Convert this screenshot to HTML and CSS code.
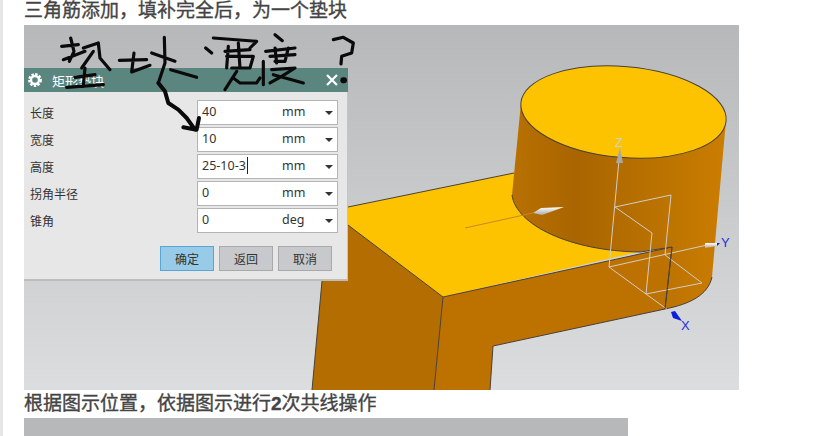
FILE: index.html
```html
<!DOCTYPE html>
<html lang="zh-CN">

<head>
    <meta charset="UTF-8">
    <title>垫块</title>
    <link rel="stylesheet" href="styles.css">
</head>

<body>
    <h3 class="first">三角筋添加，填补完全后，为一个垫块</h3>

    <div class="shot">
        <!-- Model view, drawn in page coordinates -->
        <svg class="scene" viewBox="24 25 715 365" width="715" height="365">
            <defs>
                <linearGradient id="bg" x1="0" y1="0" x2="0" y2="1">
                    <stop offset="0" stop-color="#b7b8ba" />
                    <stop offset="1" stop-color="#dcddde" />
                </linearGradient>
                <linearGradient id="body" gradientUnits="userSpaceOnUse" x1="512" y1="0" x2="726" y2="0">
                    <stop offset="0" stop-color="#b87000" />
                    <stop offset=".3" stop-color="#a96500" />
                    <stop offset=".8" stop-color="#c07600" />
                    <stop offset="1" stop-color="#cb7d00" />
                </linearGradient>
                <linearGradient id="cone" x1="0" y1="0" x2="0" y2="1">
                    <stop offset="0" stop-color="#fff" />
                    <stop offset="1" stop-color="#aaa" />
                </linearGradient>
            </defs>
            <rect x="24" y="25" width="715" height="365" fill="url(#bg)" />

            <path class="face-left" d="M322 281 L348 225 L443 297 L434 390 L312 390 Z" />
            <path class="face-right" d="M443 297 L672 247 L665 309 L493 346 L490 390 L434 390 Z" />
            <path class="top" d="M348 207 L514 173 L690 240 L443 297 L348 225 Z" />
            <path class="edge" d="M348 207 L514 173 M348 225 L443 297 L672 247 M443 297 L434 390 M322 281 L312 390 M665 309 L493 346 L490 390" />

            <path class="cyl" d="M521 103 L512 195 C516 225 570 251 640 252 L672 247 L665 309 C690 304 708 295 712 277 L726 120 Z" />
            <path class="edge" d="M512 195 C516 225 570 251 640 252 L672 247 L665 309 C690 304 708 295 712 277" />
            <ellipse class="top edge-solid" cx="623.5" cy="112" rx="103" ry="45.5" transform="rotate(5 623.5 112)" />

            <!-- Direction arrow -->
            <path class="guide" d="M465 228 L533 213" />
            <path fill="url(#cone)" d="M533 213 L541 208 L564 207 L542 215 Z" />

            <!-- Csys triad -->
            <path class="triad" d="M619 160 L609 267 L707 245 M615 207 L671 195 L665 255 L702 283 L646 294 M615 207 L652 233 L646 294 M609 267 L646 294 L668 310" />
            <path class="dark" d="M672 247 L665 309" />
            <path class="grey-cone" d="M616 163 L620 148 L623 163 Z" />
            <path fill="url(#cone)" d="M705 243 L717 243 L717 246 L705 248 Z" />
            <path class="blue" d="M717 243 L720 243 L717 246 Z M671 312 L675 311 L682 321 L673 318 Z" />
            <text class="axis axis-z" x="615" y="147">Z</text>
            <text class="axis" x="721" y="247">Y</text>
            <text class="axis" x="681" y="330">X</text>
        </svg>

        <div class="dialog">
            <div class="dialog-title">
                <svg class="gear" viewBox="0 0 14 14" width="14" height="14">
                    <circle class="gear-teeth" cx="7" cy="7" r="5.6" />
                    <circle class="gear-ring" cx="7" cy="7" r="4" />
                </svg>
                <span class="title-text">矩形垫块</span>
                <svg class="close" viewBox="0 0 12 12" width="12" height="12">
                    <path d="M1 1 L11 11 M11 1 L1 11" />
                </svg>
            </div>

            <div class="rows">
                <div class="row">
                    <label>长度</label>
                    <div class="field"><span>40</span><span>mm</span><i class="caret"></i></div>
                </div>
                <div class="row">
                    <label>宽度</label>
                    <div class="field"><span>10</span><span>mm</span><i class="caret"></i></div>
                </div>
                <div class="row">
                    <label>高度</label>
                    <div class="field"><span><b class="typing">25-10-3</b></span><span>mm</span><i class="caret"></i></div>
                </div>
                <div class="row">
                    <label>拐角半径</label>
                    <div class="field"><span>0</span><span>mm</span><i class="caret"></i></div>
                </div>
                <div class="row">
                    <label>锥角</label>
                    <div class="field"><span>0</span><span>deg</span><i class="caret"></i></div>
                </div>
            </div>

            <div class="buttons">
                <button class="primary">确定</button>
                <button>返回</button>
                <button>取消</button>
            </div>
        </div>

        <!-- Pen scribble on top of the dialog -->
        <svg class="ink" viewBox="24 25 715 365" width="715" height="365">
            <g transform="translate(50 28) scale(.3333)">
                <path d="M35 55 L85 50 M62 30 L72 70 L58 100 M40 95 L105 70 M100 60 L145 45 L150 90 L180 125 M130 70 L95 120" />
                <path d="M105 120 L100 175 M75 148 L135 140 M50 178 L160 170" />
                <path d="M208 97 L290 95 M252 75 L245 132 L300 112 M305 75 L375 100 M343 28 L345 105 L325 165 M362 125 L440 148" />
                <path class="pen-heavy" d="M325 165 L345 190 L355 225 L385 245 L410 270 L435 305 M400 298 L440 305 L447 270" />
            </g>
            <g transform="translate(195 28) scale(.3333)">
                <path d="M55 30 L185 40 L165 60 M32 60 L50 75 M90 70 L165 65 M100 55 L95 120 M130 45 L135 120 M95 85 L175 85 L165 120 L110 120" />
                <path d="M125 130 L90 185 M115 150 L135 165 L185 165 L195 150" />
                <path d="M240 20 L262 38 M212 70 L300 60 M205 100 L205 170 M240 60 L245 105 M280 60 L270 100 L240 100 M225 85 L300 80" />
                <path d="M230 125 L300 120 L260 145 L225 165 M235 140 L290 155 L325 165" />
                <path d="M415 35 L445 28 L475 45 L470 75 L440 85 L438 108" />
                <path class="pen-dot" d="M445 157 L447 157" />
            </g>
        </svg>
    </div>

    <h3 class="second">根据图示位置，依据图示进行<b>2</b>次共线操作</h3>

    <div class="shot-next"></div>
</body>

</html>
```
FILE: styles.css
```css
* {
    margin: 0;
    padding: 0;
    box-sizing: border-box;
}

html,
body {
    height: 436px;
    overflow: hidden;
}

body {
    border-left: 3px solid #e6e6e6;
    padding-left: 21px;
    background-color: white;
    font-family: "Noto Sans", "Noto Sans CJK SC", sans-serif;
    color: #333;
}

h3 {
    font-family: "Liberation Sans", "Noto Sans CJK SC", sans-serif;
    font-size: 19px;
    line-height: 28px;
    font-weight: normal;
    color: #444;
    -webkit-text-stroke: 0.35px #444;
}

h3 b {
    line-height: 1;
}

h3.first {
    height: 25px;
    line-height: 21px;
}

h3.second {
    height: 28px;
}

.shot {
    position: relative;
    width: 715px;
    height: 365px;
}

.shot svg.scene {
    display: block;
}

.shot-next {
    width: 604px;
    height: 18px;
    background-color: #b7b8ba;
}

/* Model view */
.face-left {
    fill: #b46d00;
}

.face-right {
    fill: #bd7200;
}

.top {
    fill: #fec300;
}

.cyl {
    fill: url(#body);
}

.edge {
    fill: none;
    stroke: #4a4038;
    stroke-width: 1;
}

.edge-solid {
    stroke: #4a4038;
    stroke-width: 1;
}

.guide {
    fill: none;
    stroke: #c48a20;
    stroke-width: 1;
}

.triad {
    fill: none;
    stroke: #d2ccc6;
    stroke-width: 1;
}

.dark {
    fill: none;
    stroke: #4a4038;
    stroke-width: 1;
}

.grey-cone {
    fill: #a8a8a8;
}

.blue {
    fill: #0a1ee0;
}

.axis {
    font-family: "Liberation Sans", sans-serif;
    font-size: 13px;
    fill: #1a30e0;
}

.axis-z {
    fill: #cfcfcf;
}

/* Dialog */
.dialog {
    position: absolute;
    left: 0;
    top: 43px;
    width: 324px;
    height: 213px;
    background-color: #e7e7e7;
    border-right: 1px solid #c4c4c4;
    border-bottom: 2px solid #bdbdbd;
}

.dialog-title {
    display: flex;
    align-items: center;
    height: 24px;
    margin-right: -1px;
    padding: 0 10px 0 4px;
    background-color: #5b857f;
    color: white;
    font-size: 13px;
}

.gear {
    margin-right: 10px;
}

.gear-teeth {
    fill: none;
    stroke: white;
    stroke-width: 2.6;
    stroke-dasharray: 2.4 1.3;
}

.gear-ring {
    fill: #5b857f;
    stroke: white;
    stroke-width: 2.4;
}

.title-text {
    flex: 1;
}

.close path {
    fill: none;
    stroke: white;
    stroke-width: 2.2;
}

.rows {
    display: flex;
    flex-direction: column;
    gap: 2px;
    padding: 8px 9px 0 6px;
}

.row {
    display: flex;
    align-items: center;
    justify-content: space-between;
    height: 25px;
    font-size: 12px;
}

.field {
    display: grid;
    grid-template-columns: 80px 1fr auto;
    align-items: center;
    width: 141px;
    height: 25px;
    padding: 0 4px;
    background-color: white;
    border: 1px solid #b4b4b4;
    font-size: 12.5px;
    line-height: 1;
}

.typing {
    font-weight: normal;
    padding-right: 1px;
    border-right: 1px solid #222;
}

.caret {
    width: 0;
    height: 0;
    border-left: 4px solid transparent;
    border-right: 4px solid transparent;
    border-top: 4px solid #333;
}

.buttons {
    display: flex;
    justify-content: flex-end;
    gap: 5px;
    margin-top: 13px;
    padding-right: 15px;
}

.buttons button {
    width: 54px;
    height: 25px;
    background-color: #c8c9cc;
    border: 1px solid #a9a9a9;
    font-family: inherit;
    font-size: 12px;
    color: #333;
}

.buttons .primary {
    background-color: #97cbe8;
    border-color: #5aa5d2;
}

/* Pen scribble */
.ink {
    position: absolute;
    left: 0;
    top: 0;
    pointer-events: none;
}

.ink path {
    fill: none;
    stroke: #0a0a0a;
    stroke-width: 9.5;
    stroke-linecap: round;
    stroke-linejoin: round;
}

.ink .pen-heavy {
    stroke-width: 12;
}

.ink .pen-dot {
    stroke-width: 18;
}
```
